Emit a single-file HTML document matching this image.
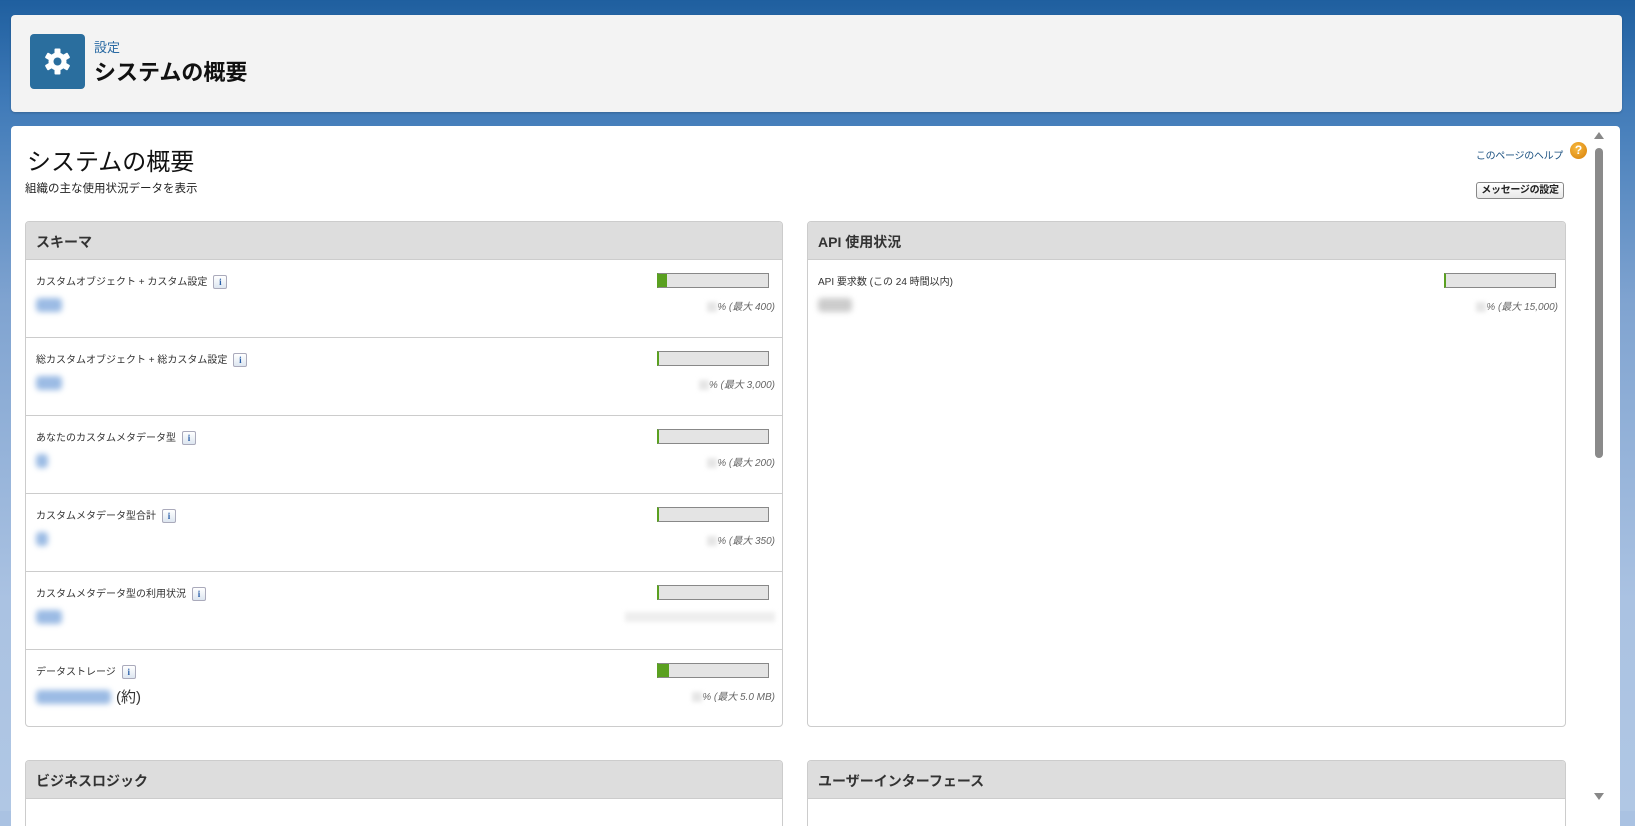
<!DOCTYPE html>
<html><head><meta charset="utf-8"><style>
*{box-sizing:border-box;margin:0;padding:0}
html{background:#aac2e2}
body{width:1635px;height:811px;overflow:hidden;position:relative;font-family:"Liberation Sans","Noto Sans CJK JP",sans-serif;background:linear-gradient(180deg,#1f5f9f 0px,#3f7ab8 100px,#7fa3d0 300px,#aac2e2 600px,#b0c7e4 811px);color:#222}
.hdr{position:absolute;left:11px;top:15px;width:1611px;height:97px;background:#f3f3f3;border-radius:4px;box-shadow:0 1px 2px rgba(0,0,0,.2)}
.ico{position:absolute;left:19px;top:19px;width:55px;height:55px;background:#2a6e9e;border-radius:4px}
.hdr .sub{position:absolute;left:83px;top:22px;font-size:13px;color:#2a6aa3}
.hdr .t{position:absolute;left:83px;top:40px;font-size:22px;font-weight:bold;color:#111}
.main{position:absolute;left:11px;top:126px;width:1609px;height:700px;background:#fff;border-radius:4px 4px 0 0;overflow:hidden}
.h1{position:absolute;left:16px;top:16px;font-size:24px;color:#111}
.desc{position:absolute;left:14px;top:54px;font-size:11.5px;color:#222}
.help{position:absolute;right:57px;top:21px;font-size:10px;color:#1a5080;letter-spacing:-0.3px}
.q{position:absolute;left:1559px;top:16px;width:17px;height:17px;border-radius:50%;background:radial-gradient(circle at 40% 35%,#f7b940,#d77f08);color:#fff;font-size:12px;font-weight:bold;text-align:center;line-height:17px}
.btn{position:absolute;left:1465px;top:56px;width:88px;height:17px;border:1px solid #888;border-radius:3px;background:linear-gradient(#fff,#e8e8e8);font-size:10px;font-weight:bold;text-align:center;line-height:15px;white-space:nowrap;letter-spacing:-0.3px}
.sb{position:absolute;left:1584px;top:22px;width:8px;height:310px;background:#8a8a8a;border-radius:4px}
.arr{position:absolute;left:1583px;width:0;height:0;border-left:5px solid transparent;border-right:5px solid transparent}
.box{position:absolute;border:1px solid #ccc;border-radius:4px;overflow:hidden;background:#fff}
.bh{height:38px;background:#dddddd;border-bottom:1px solid #ccc;font-size:14px;font-weight:bold;padding:10px 10px;color:#333}
.row{position:relative;height:78px;border-bottom:1px solid #ccc}
.row:last-child{border-bottom:none}
.lab{position:absolute;left:10px;top:13px;font-size:10px;color:#333}
.i{display:inline-block;width:14px;height:14px;border:1px solid #aab;border-radius:2px;background:linear-gradient(#fff,#dde6f0);color:#2a5fa8;font-size:9px;font-weight:bold;text-align:center;line-height:12px;margin-left:6px;vertical-align:middle;font-family:"Liberation Serif",serif}
.bar{position:absolute;left:631px;top:13px;width:112px;height:15px;background:#e4e4e4;border:1px solid #888;border-left:2px solid #5aa020}
.bar b{display:block;height:100%;background:#5aa020}
.pct{position:absolute;right:7px;top:38px;font-size:10px;color:#666;font-style:italic}
.pct .bl{display:inline-block;width:10px;height:10px;background:#e6e6e6;filter:blur(2px);vertical-align:middle}
.val{position:absolute;left:10px;top:38px;height:14px;background:#9bbbe4;filter:blur(3px);border-radius:4px}
</style></head><body>
<div class="hdr"><div class="ico"><svg width="55" height="55" viewBox="0 0 55 55"><g transform="translate(27.5 27.5)" fill="#fff"><circle r="9"/><g id="t"><rect x="-3" y="-13" width="6" height="6" rx="1"/></g><use href="#t" transform="rotate(60)"/><use href="#t" transform="rotate(120)"/><use href="#t" transform="rotate(180)"/><use href="#t" transform="rotate(240)"/><use href="#t" transform="rotate(300)"/><circle r="4" fill="#2a6e9e"/></g></svg></div>
<div class="sub">設定</div><div class="t">システムの概要</div></div>
<div class="main">
<div class="h1">システムの概要</div>
<div class="desc">組織の主な使用状況データを表示</div>
<div class="help">このページのヘルプ</div><div class="q">?</div>
<div class="btn">メッセージの設定</div>
<div class="arr" style="top:6px;border-bottom:7px solid #888"></div>
<div class="sb"></div>
<div class="arr" style="top:667px;border-top:7px solid #888"></div>
<div class="box" style="left:14px;top:95px;width:758px;height:506px">
<div class="bh">スキーマ</div>
<div class="row"><div class="lab">カスタムオブジェクト + カスタム設定<span class="i">i</span></div><div class="val" style="width:26px"></div><div class="bar"><b style="width:8px"></b></div><div class="pct"><span class="bl"></span>% (最大 400)</div></div>
<div class="row"><div class="lab">総カスタムオブジェクト + 総カスタム設定<span class="i">i</span></div><div class="val" style="width:26px"></div><div class="bar"></div><div class="pct"><span class="bl"></span>% (最大 3,000)</div></div>
<div class="row"><div class="lab">あなたのカスタムメタデータ型<span class="i">i</span></div><div class="val" style="width:12px"></div><div class="bar"></div><div class="pct"><span class="bl"></span>% (最大 200)</div></div>
<div class="row"><div class="lab">カスタムメタデータ型合計<span class="i">i</span></div><div class="val" style="width:12px"></div><div class="bar"></div><div class="pct"><span class="bl"></span>% (最大 350)</div></div>
<div class="row"><div class="lab">カスタムメタデータ型の利用状況<span class="i">i</span></div><div class="val" style="width:26px"></div><div class="bar"></div><div class="pct" style="width:150px;height:10px;background:#eee;filter:blur(2px);top:40px"></div></div>
<div class="row"><div class="lab">データストレージ<span class="i">i</span></div><div class="val" style="width:75px;top:40px"></div><div style="position:absolute;left:90px;top:36px;font-size:15px;color:#333">(約)</div><div class="bar"><b style="width:10px"></b></div><div class="pct"><span class="bl"></span>% (最大 5.0 MB)</div></div>
</div>
<div class="box" style="left:796px;top:95px;width:759px;height:506px">
<div class="bh">API 使用状況</div>
<div class="row" style="border:none"><div class="lab">API 要求数 (この 24 時間以内)</div><div class="val" style="width:34px;background:#ccc"></div><div class="bar" style="left:636px"></div><div class="pct"><span class="bl"></span>% (最大 15,000)</div></div>
</div>
<div class="box" style="left:14px;top:634px;width:758px;height:80px"><div class="bh">ビジネスロジック</div></div>
<div class="box" style="left:796px;top:634px;width:759px;height:80px"><div class="bh">ユーザーインターフェース</div></div>
</div>
</body></html>
